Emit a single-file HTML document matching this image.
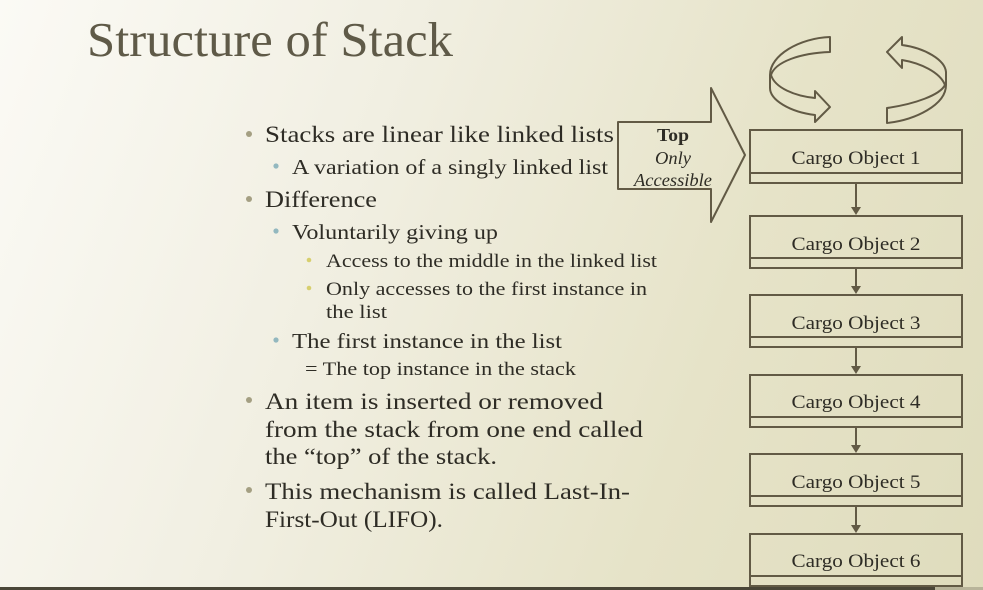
<!DOCTYPE html>
<html><head><meta charset="utf-8"><style>
html,body{margin:0;padding:0}
body{width:983px;height:590px;overflow:hidden;background:linear-gradient(110deg,#fbfaf5 0%,#f1efe2 35%,#e6e3c8 70%,#dfdcbd 100%)}
svg{display:block}
text{font-family:"Liberation Serif","DejaVu Serif",serif;fill:#2e2c25}
</style></head><body>
<svg width="983" height="590" viewBox="0 0 983 590">
<text x="87" y="56" font-size="49" fill="#5f5a48" style="fill:#5f5a48" textLength="366" lengthAdjust="spacingAndGlyphs">Structure of Stack</text>

<g font-size="23">
<circle cx="249" cy="134" r="3" fill="#a49f82"/>
<text x="265" y="142" textLength="349" lengthAdjust="spacingAndGlyphs">Stacks are linear like linked lists</text>
<circle cx="276" cy="166" r="2.6" fill="#93b8bf"/>
<text x="292" y="174" font-size="21" textLength="316" lengthAdjust="spacingAndGlyphs">A variation of a singly linked list</text>
<circle cx="249" cy="199" r="3" fill="#a49f82"/>
<text x="265" y="207" textLength="112" lengthAdjust="spacingAndGlyphs">Difference</text>
<circle cx="276" cy="231" r="2.6" fill="#93b8bf"/>
<text x="292" y="239" font-size="21" textLength="206" lengthAdjust="spacingAndGlyphs">Voluntarily giving up</text>
<circle cx="309" cy="260" r="2.3" fill="#d7cf6e"/>
<text x="326" y="267" font-size="19" textLength="331" lengthAdjust="spacingAndGlyphs">Access to the middle in the linked list</text>
<circle cx="309" cy="288" r="2.3" fill="#d7cf6e"/>
<text x="326" y="295" font-size="19" textLength="321" lengthAdjust="spacingAndGlyphs">Only accesses to the first instance in</text>
<text x="326" y="318" font-size="19" textLength="61" lengthAdjust="spacingAndGlyphs">the list</text>
<circle cx="276" cy="340" r="2.6" fill="#93b8bf"/>
<text x="292" y="348" font-size="21" textLength="270" lengthAdjust="spacingAndGlyphs">The first instance in the list</text>
<text x="305" y="375" font-size="19" textLength="271" lengthAdjust="spacingAndGlyphs">= The top instance in the stack</text>
<circle cx="249" cy="400" r="3" fill="#a49f82"/>
<text x="265" y="409" textLength="338" lengthAdjust="spacingAndGlyphs">An item is inserted or removed</text>
<text x="265" y="437" textLength="378" lengthAdjust="spacingAndGlyphs">from the stack from one end called</text>
<text x="265" y="464" textLength="232" lengthAdjust="spacingAndGlyphs">the “top” of the stack.</text>
<circle cx="249" cy="490" r="3" fill="#a49f82"/>
<text x="265" y="499" textLength="365" lengthAdjust="spacingAndGlyphs">This mechanism is called Last-In-</text>
<text x="265" y="527" textLength="178" lengthAdjust="spacingAndGlyphs">First-Out (LIFO).</text>
</g>

<g fill="none" stroke="#625a45" stroke-width="2" stroke-linejoin="round">
<path d="M618,122 L711,122 L711,88 L745,155 L711,222 L711,189 L618,189 Z"/>
<path d="M830,37 L830,52 C800,53 775,62 771,75 C775,88 795,96 815,98 L815,91 L830,107 L815,122 L815,115 C790,112 770,100 770,88 L770,75 C770,55 800,38 830,37 Z"/>
<path d="M887,123 L887,108 C915,104 940,95 945,85 C940,72 920,63 902,60 L902,68 L887,52 L902,37 L902,45 C925,48 945,60 946,72 L946,85 C946,105 915,120 887,123 Z"/>
</g>
<g font-size="18" text-anchor="middle">
<text x="673" y="141" font-weight="bold" textLength="32" lengthAdjust="spacingAndGlyphs">Top</text>
<text x="673" y="164" font-style="italic" textLength="36" lengthAdjust="spacingAndGlyphs">Only</text>
<text x="673" y="186" font-style="italic" textLength="78" lengthAdjust="spacingAndGlyphs">Accessible</text>
</g>

<g fill="none" stroke="#625a45" stroke-width="2">
<rect x="750" y="130" width="212" height="53"/><line x1="750" y1="173" x2="962" y2="173"/>
<rect x="750" y="216" width="212" height="52"/><line x1="750" y1="258" x2="962" y2="258"/>
<rect x="750" y="295" width="212" height="52"/><line x1="750" y1="337" x2="962" y2="337"/>
<rect x="750" y="375" width="212" height="52"/><line x1="750" y1="417" x2="962" y2="417"/>
<rect x="750" y="454" width="212" height="52"/><line x1="750" y1="496" x2="962" y2="496"/>
<rect x="750" y="534" width="212" height="52"/><line x1="750" y1="576" x2="962" y2="576"/>
<line x1="856" y1="183" x2="856" y2="209"/>
<line x1="856" y1="268" x2="856" y2="288"/>
<line x1="856" y1="347" x2="856" y2="368"/>
<line x1="856" y1="427" x2="856" y2="447"/>
<line x1="856" y1="506" x2="856" y2="527"/>
</g>
<g fill="#625a45">
<path d="M851,207 L861,207 L856,215 Z"/>
<path d="M851,286 L861,286 L856,294 Z"/>
<path d="M851,366 L861,366 L856,374 Z"/>
<path d="M851,445 L861,445 L856,453 Z"/>
<path d="M851,525 L861,525 L856,533 Z"/>
</g>
<g font-size="19" text-anchor="middle">
<text x="856" y="164" textLength="129" lengthAdjust="spacingAndGlyphs">Cargo Object 1</text>
<text x="856" y="250" textLength="129" lengthAdjust="spacingAndGlyphs">Cargo Object 2</text>
<text x="856" y="329" textLength="129" lengthAdjust="spacingAndGlyphs">Cargo Object 3</text>
<text x="856" y="408" textLength="129" lengthAdjust="spacingAndGlyphs">Cargo Object 4</text>
<text x="856" y="488" textLength="129" lengthAdjust="spacingAndGlyphs">Cargo Object 5</text>
<text x="856" y="567" textLength="129" lengthAdjust="spacingAndGlyphs">Cargo Object 6</text>
</g>
<rect x="0" y="587" width="935" height="3" fill="#4a4638"/>
<rect x="935" y="587" width="48" height="3" fill="#b8b49a"/>
</svg>
</body></html>
